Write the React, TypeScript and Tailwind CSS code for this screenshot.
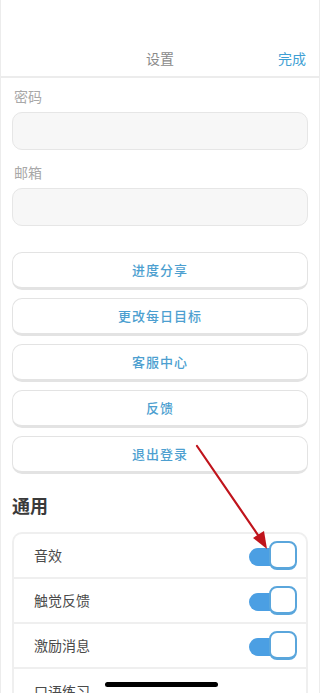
const FONT = { fontFamily: '"Noto Sans CJK SC", "Noto Sans", sans-serif' };

const ACTIONS = ["进度分享", "更改每日目标", "客服中心", "反馈", "退出登录"];
const TOGGLES = ["音效", "触觉反馈", "激励消息"];

function Toggle() {
  return (
    <div className="relative w-[48px] h-[29px] shrink-0">
      <div className="absolute left-0 top-[7px] w-[32px] h-[18px] rounded-full bg-[#4b9fe3]" />
      <div className="absolute right-0 top-0 w-[28px] h-[29px] rounded-[8px] bg-white border-2 border-b-[3px] border-[#5aa6dc]" />
    </div>
  );
}

export default function App() {
  return (
    <div
      className="relative w-[320px] h-[693px] overflow-hidden bg-white border-x border-[#ececec]"
      style={FONT}
    >
      {/* Header */}
      <div className="h-[40px]" />
      <div className="relative h-[38px] flex items-center justify-center border-b-2 border-[#ececec]">
        <span className="text-[14px] text-[#8a8a8a]">设置</span>
        <span className="absolute right-[13px] text-[14px] text-[#3f9fd4]">完成</span>
      </div>

      <div className="px-[11px]">
        {/* Account fields */}
        <div className="pt-[8px] pb-[5px] pl-[2px] text-[14px] text-[#a8a8a8] leading-[21px]">密码</div>
        <div className="h-[38px] rounded-[10px] bg-[#f7f7f7] border border-[#e6e6e6]" />
        <div className="pt-[12px] pb-[5px] pl-[2px] text-[14px] text-[#a8a8a8] leading-[21px]">邮箱</div>
        <div className="h-[38px] rounded-[10px] bg-[#f7f7f7] border border-[#e6e6e6]" />

        {/* Action buttons */}
        <div className="mt-[26px] flex flex-col gap-[8px]">
          {ACTIONS.map((label) => (
            <div
              key={label}
              className="h-[38px] rounded-[10px] bg-white border border-b-[3px] border-[#e3e3e3] flex items-center justify-center text-[13px] font-medium tracking-[1px] text-[#4d9fd0]"
            >
              {label}
            </div>
          ))}
        </div>

        {/* General */}
        <div className="mt-[19px] text-[18px] font-semibold text-[#3a3a3a] leading-[24px]">通用</div>
        <div className="mt-[15px] rounded-t-[10px] border-x-2 border-t-2 border-[#efefef]">
          {TOGGLES.map((label) => (
            <div
              key={label}
              className="h-[45px] flex items-center justify-between pl-[20px] pr-[9px] border-b-2 border-[#efefef]"
            >
              <span className="text-[14px] text-[#4a4a4a]">{label}</span>
              <Toggle />
            </div>
          ))}
          <div className="h-[45px] flex items-center pl-[20px]">
            <span className="text-[14px] text-[#4a4a4a]">口语练习</span>
          </div>
        </div>
      </div>

      {/* Home indicator */}
      <div className="absolute left-[104px] bottom-[6px] w-[113px] h-[5px] rounded-full bg-black" />

      {/* Annotation arrow */}
      <svg className="absolute left-0 top-0 pointer-events-none" width="320" height="693" viewBox="0 0 320 693">
        <line x1="196" y1="446" x2="259" y2="538" stroke="#c0141c" strokeWidth="2.2" strokeLinecap="round" />
        <polygon points="266,549 252,538 263,531" fill="#c0141c" />
      </svg>
    </div>
  );
}
